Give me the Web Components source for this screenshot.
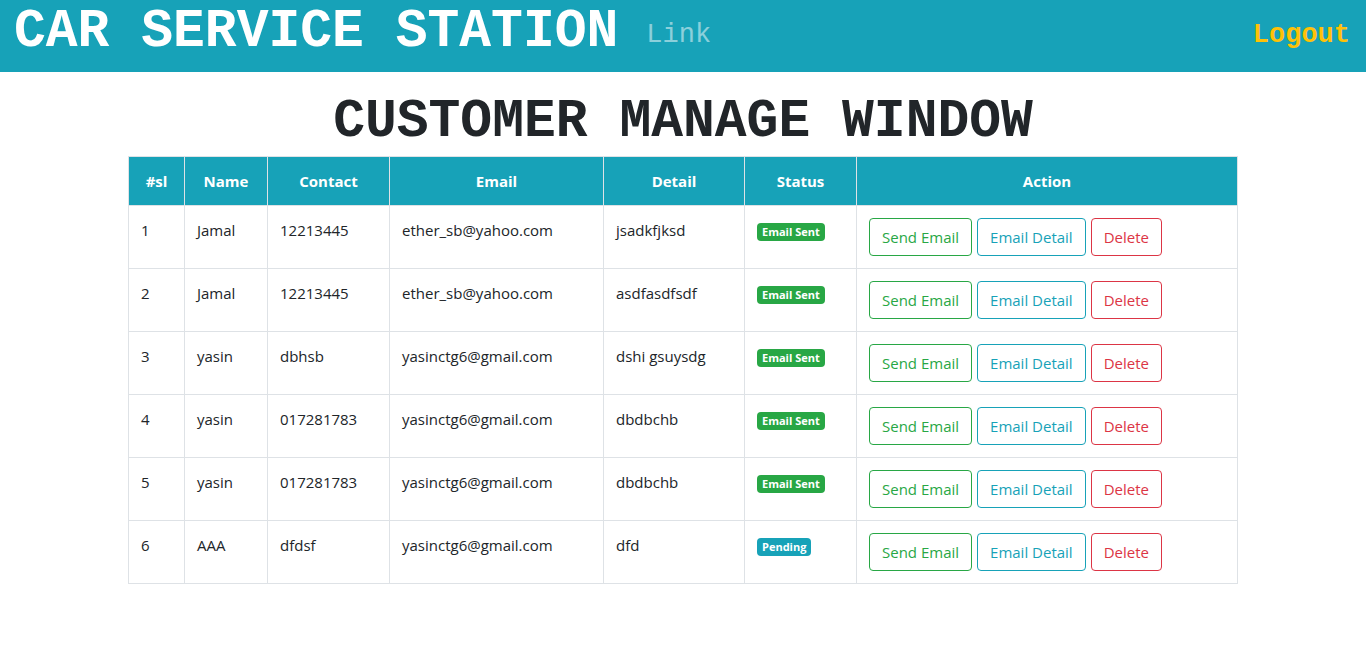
<!DOCTYPE html>
<html lang="en">
<head>
<meta charset="utf-8">
<meta name="viewport" content="width=device-width, initial-scale=1">
<title>Car Service Station</title>
<style>
  :root {
    --info: #17a2b8; --success: #28a745; --danger: #dc3545; --warning: #ffc107;
    --ink: #212529; --line: #dee2e6;
    --display: "Liberation Mono", "Courier New", monospace;
  }
  body { margin: 0; background: #fff; color: var(--ink); font: 15px/24px "Open Sans", "Noto Sans", sans-serif; }
</style>
</head>
<body>
<station-app></station-app>
<script>
class BaseElement extends HTMLElement {
  connectedCallback() {
    if (this.shadowRoot) return;
    this.attachShadow({ mode: "open" }).innerHTML = this.view();
  }
}

customElements.define("nav-bar", class extends BaseElement {
  view() {
    return `<style>
      :host { display: block; background: var(--info); font-family: var(--display); }
      nav { display: flex; align-items: center; padding: 4px 16px 12px 14px; }
      a { color: inherit; text-decoration: none; white-space: nowrap; }
      .brand { color: #fff; font-size: 53px; line-height: 56px; font-weight: 700; margin-right: 28px; }
      .link, .logout { font-size: 27px; line-height: 32px; padding-top: 6px; }
      .link { color: rgba(255,255,255,.5); }
      .logout { color: var(--warning); margin-left: auto; font-weight: 700; }
    </style>
    <nav><a class="brand" href="#home">CAR SERVICE STATION</a><a class="link" href="#link">Link</a><a class="logout" href="#logout">Logout</a></nav>`;
  }
});

customElements.define("page-title", class extends BaseElement {
  view() {
    return `<style>
      :host { display: block; }
      h1 { margin: 0; padding: 20px 0 4px; font: 700 53px/60px var(--display); text-align: center; white-space: nowrap; }
    </style><h1><slot></slot></h1>`;
  }
});

customElements.define("status-badge", class extends BaseElement {
  view() {
    return `<style>
      :host { display: inline-block; background: var(--info); color: #fff; border-radius: 4px;
        padding: 1px 5px; font-size: 11px; line-height: 16px; font-weight: 700; white-space: nowrap; vertical-align: middle; }
      :host([kind="sent"]) { background: var(--success); }
    </style><slot></slot>`;
  }
});

customElements.define("outline-button", class extends BaseElement {
  view() {
    return `<style>
      :host { display: block; color: var(--info); }
      :host([kind="success"]) { color: var(--success); }
      :host([kind="danger"]) { color: var(--danger); }
      button { display: block; box-sizing: border-box; margin: 0; padding: 6px 12px; background: transparent;
        border: 1px solid currentColor; border-radius: 4px; color: inherit; font: inherit; white-space: nowrap; cursor: pointer; }
    </style><button type="button"><slot></slot></button>`;
  }
});

const customers = [
  ["Jamal", "12213445", "ether_sb@yahoo.com", "jsadkfjksd", true],
  ["Jamal", "12213445", "ether_sb@yahoo.com", "asdfasdfsdf", true],
  ["yasin", "dbhsb", "yasinctg6@gmail.com", "dshi gsuysdg", true],
  ["yasin", "017281783", "yasinctg6@gmail.com", "dbdbchb", true],
  ["yasin", "017281783", "yasinctg6@gmail.com", "dbdbchb", true],
  ["AAA", "dfdsf", "yasinctg6@gmail.com", "dfd", false]
];

customElements.define("customer-table", class extends BaseElement {
  view() {
    const rows = customers.map(([name, contact, email, detail, sent], i) => `<tr>
      <td>${i + 1}</td><td>${name}</td><td>${contact}</td><td>${email}</td><td>${detail}</td>
      <td><status-badge kind="${sent ? "sent" : "pending"}">${sent ? "Email Sent" : "Pending"}</status-badge></td>
      <td><div class="actions"><outline-button kind="success">Send Email</outline-button><outline-button kind="info">Email Detail</outline-button><outline-button kind="danger">Delete</outline-button></div></td>
    </tr>`).join("");
    return `<style>
      :host { display: block; }
      table { width: 100%; border-collapse: collapse; table-layout: fixed; }
      th, td { border: 1px solid var(--line); padding: 12px; text-align: left; vertical-align: top; }
      th { background: var(--info); color: #fff; font-weight: 700; text-align: center; }
      .actions { display: flex; gap: 5px; }
      .sl { width: 56px; } .name { width: 83px; } .contact { width: 122px; } .email { width: 214px; }
      .detail { width: 141px; } .status { width: 112px; }
    </style>
    <table>
      <colgroup><col class="sl"><col class="name"><col class="contact"><col class="email"><col class="detail"><col class="status"><col></colgroup>
      <thead><tr><th scope="col">#sl</th><th scope="col">Name</th><th scope="col">Contact</th><th scope="col">Email</th><th scope="col">Detail</th><th scope="col">Status</th><th scope="col">Action</th></tr></thead>
      <tbody>${rows}</tbody>
    </table>`;
  }
});

customElements.define("station-app", class extends BaseElement {
  view() {
    return `<style>
      :host { display: block; }
      main { box-sizing: border-box; max-width: 1140px; margin: 0 auto; padding: 0 15px 16px; }
    </style>
    <nav-bar></nav-bar>
    <main><page-title>CUSTOMER MANAGE WINDOW</page-title><customer-table></customer-table></main>`;
  }
});
</script>
</body>
</html>
